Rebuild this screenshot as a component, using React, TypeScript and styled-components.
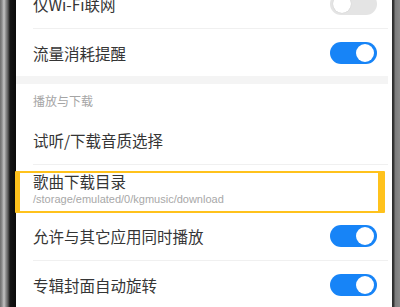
import React from "react";
import styled, { createGlobalStyle } from "styled-components";

const Global = createGlobalStyle`
  html, body { margin: 0; padding: 0; background: #000; }
  body { font-family: "Noto Sans CJK SC", "Noto Sans", sans-serif; }
`;

const Frame = styled.div`
  position: relative;
  display: flex;
  width: 400px;
  height: 307px;
  overflow: hidden;
`;

const LeftBezel = styled.div`
  width: 16px;
  flex: none;
  background: linear-gradient(
    to right,
    #6c6c6c 0px,
    #8e8e8e 2px,
    #c4c4c4 4px,
    #8a8a8a 6px,
    #5a5a5a 8px,
    #151515 10px,
    #0b0b0b 16px
  );
`;

const RightBezel = styled.div`
  width: 8px;
  flex: none;
  background: linear-gradient(
    to right,
    #2a2a2a 0px,
    #3a3a3a 2px,
    #7c7c7c 3px,
    #8a8a8a 8px
  );
`;

const Screen = styled.div`
  flex: 1;
  background: #fff;
  display: flex;
  flex-direction: column;
  margin-top: -20px;
`;

const Row = styled.div<{ $h?: number }>`
  height: ${(p) => p.$h ?? 48}px;
  flex: none;
  display: flex;
  align-items: center;
  justify-content: space-between;
  padding: 0 15px 0 17px;
`;

const TextCol = styled.div`
  display: flex;
  flex-direction: column;
`;

const Title = styled.div`
  font-size: 15.5px;
  color: #353535;
  line-height: 18px;
`;

const Sub = styled.div`
  font-family: "Liberation Sans", "Noto Sans", sans-serif;
  font-size: 11px;
  color: #a8a8a8;
  line-height: 12px;
  margin-top: 3px;
`;

const Divider = styled.div`
  height: 1px;
  flex: none;
  background: #f0f0f0;
  margin: 0 4px 0 17px;
`;

const Band = styled.div`
  height: 8px;
  flex: none;
  background: #f4f4f4;
  margin-right: 4px;
`;

const SectionHeader = styled.div`
  height: 32px;
  flex: none;
  display: flex;
  align-items: center;
  padding: 0 0 0 17px;
  font-size: 12px;
  color: #a5a5a5;
`;

const Track = styled.div<{ $on: boolean }>`
  position: relative;
  width: 47px;
  height: 22px;
  border-radius: 11px;
  background: ${(p) => (p.$on ? "#1784f7" : "#e4e4e4")};
  flex: none;
`;

const Knob = styled.div<{ $on: boolean }>`
  position: absolute;
  top: 2px;
  ${(p) => (p.$on ? "right: 3px;" : "left: 3px;")}
  width: 18px;
  height: 18px;
  border-radius: 50%;
  background: #fff;
  box-shadow: ${(p) => (p.$on ? "none" : "0 0 1px rgba(0,0,0,0.2)")};
`;

const Highlight = styled.div`
  position: absolute;
  left: 15px;
  top: 171px;
  width: 358px;
  height: 38px;
  border-style: solid;
  border-color: #ffc21c;
  border-width: 2px 7px 2px 5px;
  border-radius: 1px;
`;

const Toggle = ({ on }: { on: boolean }) => (
  <Track $on={on}>
    <Knob $on={on} />
  </Track>
);

export default function App() {
  return (
    <>
      <Global />
      <Frame>
        <LeftBezel />
        <Screen>
          <Row>
            <Title>仅Wi-Fi联网</Title>
            <Toggle on={false} />
          </Row>
          <Divider />
          <Row $h={47}>
            <Title>流量消耗提醒</Title>
            <Toggle on={true} />
          </Row>
          <Band />
          <SectionHeader>播放与下载</SectionHeader>
          <Row>
            <Title>试听/下载音质选择</Title>
          </Row>
          <Divider />
          <Row $h={47}>
            <TextCol>
              <Title>歌曲下载目录</Title>
              <Sub>/storage/emulated/0/kgmusic/download</Sub>
            </TextCol>
          </Row>
          <Row>
            <Title>允许与其它应用同时播放</Title>
            <Toggle on={true} />
          </Row>
          <Divider />
          <Row>
            <Title>专辑封面自动旋转</Title>
            <Toggle on={true} />
          </Row>
        </Screen>
        <RightBezel />
        <Highlight />
      </Frame>
    </>
  );
}
